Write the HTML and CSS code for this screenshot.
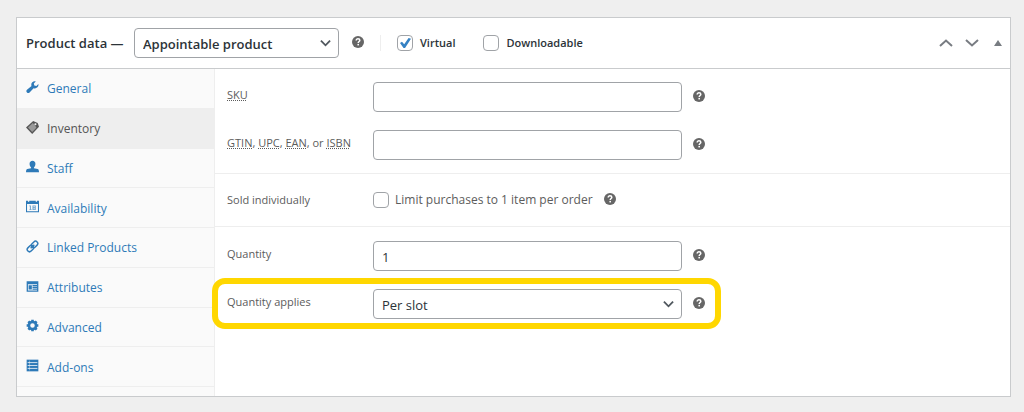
FILE: index.html
```html
<!DOCTYPE html>
<html lang="en">
<head>
    <meta charset="UTF-8">
    <meta name="viewport" content="width=device-width, initial-scale=1.0">
    <title>Product data</title>
    <link rel="stylesheet" href="styles.css">
</head>
<body>
    <!-- Shared icon -->
    <svg class="sprite" aria-hidden="true">
        <symbol id="help" viewBox="0 0 12 12">
            <circle cx="6" cy="6" r="6" fill="#666"/>
            <path d="M4.2 4.6C4.2 3.3 5 2.8 6 2.8s1.800.6 1.800 1.500C7.800 5.500 6.200 5.500 6.200 7" fill="none" stroke="#fff" stroke-width="1.500"/>
            <rect x="5.400" y="7.900" width="1.600" height="1.500" fill="#fff"/>
        </symbol>
    </svg>

    <div class="panel">
        <div class="panel-header">
            <label class="title" for="product-type">Product data —</label>
            <div class="select-wrap type-select">
                <select id="product-type">
                    <option>Appointable product</option>
                </select>
                <svg class="chevron" viewBox="0 0 12 8"><path d="M1 1.500l5 5 5-5"/></svg>
            </div>
            <svg class="help"><use href="#help"/></svg>
            <div class="type-options">
                <label class="check"><input type="checkbox" checked>Virtual</label>
                <label class="check"><input type="checkbox">Downloadable</label>
            </div>
            <div class="panel-actions">
                <button type="button" aria-label="Move up"><svg width="14" height="8" viewBox="0 0 14 8"><path class="arrow" d="M1 7l6-5.500L13 7"/></svg></button>
                <button type="button" aria-label="Move down"><svg width="14" height="8" viewBox="0 0 14 8"><path class="arrow" d="M1 1l6 5.500L13 1"/></svg></button>
                <button type="button" aria-label="Toggle panel"><svg width="8" height="6" viewBox="0 0 8 6"><path fill="#787c82" d="M4 0l4 6H0z"/></svg></button>
            </div>
        </div>

        <div class="panel-body">
            <nav class="tabs">
                <a href="#general">
                    <svg viewBox="0 0 20 20"><path d="M17.500 9.800c-1.600 1.600-3.900 1.900-5.800 1.200L5.500 17.500a2.600 2.600 0 0 1-4-4L8.500 7.800c-.8-2-.4-4.200 1.200-5.700C11.200.6 13.200.2 15 .8l-3 3 .8 3.200 3.200.8 3-3c.5 1.700-.1 3.600-1.500 5z"/></svg>
                    General
                </a>
                <a href="#inventory" class="active">
                    <svg viewBox="0 0 20 20"><path d="M11 0l7 3 2 6L9.500 20 0 10z"/><path d="M10.500 3l4 4.500 1.500 3-6.500 6.500L3 10z" fill="#999"/><circle cx="14.500" cy="5" r="1.600" fill="#eee"/></svg>
                    Inventory
                </a>
                <a href="#staff">
                    <svg viewBox="0 0 20 20"><path d="M10 1c2.800 0 4.500 2 4.500 4.800 0 2.500-1 4.700-2.300 5.700v1.300L18 14c1.300.5 2 2 2 5H0c0-3 .7-4.500 2-5l5.800-1.200v-1.300C6.500 10.500 5.500 8.300 5.500 5.800 5.500 3 7.200 1 10 1z"/></svg>
                    Staff
                </a>
                <a href="#availability">
                    <svg viewBox="0 0 20 20"><path fill-rule="evenodd" d="M0 1h3v1.500h2V1h10v1.500h2V1h3v18H0zM1.600 6v11.400h16.800V6z"/><path d="M5 8.500h2.500v6H9v1H5v-1h1v-5H5zM10 8.500h5v7h-5zm1.500 1.200v1.400h2V9.700zm0 3v1.500h2v-1.500z" fill-rule="evenodd" opacity=".7"/></svg>
                    Availability
                </a>
                <a href="#linked">
                    <svg viewBox="0 0 20 20"><g transform="rotate(-45 10 10)" fill="none" stroke="currentColor" stroke-width="2.200"><rect x="0" y="6.500" width="11" height="7" rx="3.500"/><rect x="9" y="6.500" width="11" height="7" rx="3.500"/><path d="M6 10h8"/></g></svg>
                    Linked Products
                </a>
                <a href="#attributes">
                    <svg viewBox="0 0 20 20"><path fill-rule="evenodd" d="M1 2h18v16H1zM3 6.500v9.500h14V6.500z"/><path d="M4 8h5v6.500H4zM10 7.500h7v2h-7zM10 10.500h7v2h-7zM10 13.500h7V15h-7z"/></svg>
                    Attributes
                </a>
                <a href="#advanced">
                    <svg viewBox="0 0 20 20"><circle cx="10" cy="10" r="5.500" fill="none" stroke="currentColor" stroke-width="4"/><path fill="none" stroke="currentColor" stroke-width="4" d="M10 1v3M10 16v3M1 10h3M16 10h3M3.600 3.600l2.200 2.200M14.200 14.200l2.200 2.200M3.600 16.400l2.200-2.200M14.200 5.800l2.200-2.200"/></svg>
                    Advanced
                </a>
                <a href="#addons">
                    <svg viewBox="0 0 20 20"><path d="M1 1h18v18H1z"/><path stroke="#fafafa" stroke-width="1.200" d="M2.500 5.500h15M2.500 10h15M2.500 14.500h15"/><path stroke="#fafafa" stroke-width=".6" d="M5.500 2.500v15"/></svg>
                    Add-ons
                </a>
            </nav>

            <div class="options">
                <div class="group">
                    <div class="field">
                        <label for="sku"><abbr>SKU</abbr></label>
                        <input type="text" id="sku">
                        <svg class="help"><use href="#help"/></svg>
                    </div>
                    <div class="field">
                        <label for="gtin"><abbr>GTIN</abbr>, <abbr>UPC</abbr>, <abbr>EAN</abbr>, or <abbr>ISBN</abbr></label>
                        <input type="text" id="gtin">
                        <svg class="help"><use href="#help"/></svg>
                    </div>
                </div>
                <div class="group">
                    <div class="field check-field">
                        <label for="sold">Sold individually</label>
                        <input type="checkbox" id="sold">
                        <label class="description" for="sold">Limit purchases to 1 item per order</label>
                        <svg class="help"><use href="#help"/></svg>
                    </div>
                </div>
                <div class="group">
                    <div class="field">
                        <label for="qty">Quantity</label>
                        <input type="text" id="qty" value="1">
                        <svg class="help"><use href="#help"/></svg>
                    </div>
                    <div class="field highlight">
                        <label for="qty-applies">Quantity applies</label>
                        <div class="select-wrap">
                            <select id="qty-applies">
                                <option>Per slot</option>
                            </select>
                            <svg class="chevron" viewBox="0 0 12 8"><path d="M1 1.500l5 5 5-5"/></svg>
                        </div>
                        <svg class="help"><use href="#help"/></svg>
                    </div>
                </div>
            </div>
        </div>
    </div>
</body>
</html>
```
FILE: styles.css
```css
* {
    box-sizing: border-box;
}
body {
    margin: 0;
    padding: 17px 13px 15px 16px;
    background: #efefef;
    color: #2c3338;
    font-family: "Open Sans", "Noto Sans", sans-serif;
    font-size: 12px;
    line-height: 16px;
}
.sprite {
    display: none;
}
.panel {
    background: #fff;
    border: 1px solid #c9cbcd;
}
.panel-header {
    display: flex;
    align-items: center;
    height: 51px;
    padding: 0 8px 0 9px;
    border-bottom: 1px solid #c9cbcd;
    font-weight: 600;
}
.title {
    width: 108px;
    font-size: 13px;
    white-space: nowrap;
}
.select-wrap {
    display: grid;
    align-items: center;
    width: 309px;
}
.select-wrap select,
.select-wrap .chevron {
    grid-area: 1 / 1;
}
.type-select {
    width: 205px;
}
.type-select select {
    font-weight: 600;
}
select,
input[type="text"] {
    width: 100%;
    height: 30px;
    margin: 0;
    padding: 2px 8px 0;
    border: 1px solid #a0a3a7;
    border-radius: 4px;
    background: #fff;
    color: #2c3338;
    font-family: inherit;
    font-size: 13px;
    appearance: none;
}
.chevron {
    justify-self: end;
    width: 11px;
    height: 8px;
    margin-right: 8px;
    fill: none;
    stroke: #50575e;
    stroke-width: 2;
    pointer-events: none;
}
.help {
    flex: none;
    width: 12px;
    height: 12px;
    margin-bottom: 2px;
}
.type-select + .help {
    margin: 0 16px 2px 13px;
}
.type-options {
    display: flex;
    gap: 28px;
    padding-left: 16px;
    border-left: 1px solid #eee;
    font-size: 11px;
}
.check {
    display: flex;
    align-items: center;
    gap: 7px;
}
input[type="checkbox"] {
    flex: none;
    width: 16px;
    height: 16px;
    margin: 0;
    border: 1px solid #a0a3a7;
    border-radius: 4px;
    background: #fff;
    appearance: none;
}
input[type="checkbox"]:checked::before {
    content: "";
    display: block;
    width: 11px;
    height: 10px;
    margin: 2px 0 0 2px;
    background: #3582c4;
    clip-path: polygon(0 50%, 18% 38%, 38% 62%, 78% 0, 100% 8%, 46% 100%, 32% 100%);
}
.panel-actions {
    display: flex;
    gap: 12px;
    margin-left: auto;
}
.panel-actions button {
    display: flex;
    align-items: center;
    padding: 0;
    border: 0;
    background: none;
}
.panel-actions button:last-child {
    margin-left: 3px;
}
.arrow {
    fill: none;
    stroke: #787c82;
    stroke-width: 2;
}
.panel-body {
    display: flex;
    min-height: 327px;
}
.tabs {
    display: flex;
    flex-direction: column;
    flex: none;
    width: 198px;
    padding-bottom: 9px;
    background: #fafafa;
    border-right: 1px solid #eee;
}
.tabs a {
    display: flex;
    flex: 1;
    align-items: center;
    gap: 8px;
    padding: 2px 0 0 9px;
    border-bottom: 1px solid #eee;
    color: #2e7ab8;
    text-decoration: none;
}
.tabs a.active {
    background: #eee;
    color: #555;
}
.tabs svg {
    width: 13px;
    height: 13px;
    margin-bottom: 4px;
    fill: currentColor;
}
.options {
    flex: 1;
}
.group {
    display: flex;
    flex-direction: column;
    gap: 18px;
    padding: 13px 12px;
    border-bottom: 1px solid #eee;
}
.group:last-child {
    padding-top: 14px;
    border-bottom: 0;
}
.field {
    display: flex;
    align-items: center;
    min-height: 26px;
    color: #5c5c5c;
}
.field > label:first-child {
    flex: none;
    width: 146px;
    padding-bottom: 4px;
    font-size: 11px;
}
.check-field > label:first-child {
    padding-bottom: 0;
}
.field input[type="text"] {
    width: 309px;
}
.field .help {
    margin-left: 11px;
}
.description {
    margin-left: 6px;
}
abbr {
    text-decoration: underline dotted;
}
.highlight {
    position: relative;
    align-self: flex-start;
}
/* yellow frame drawn around the row */
.highlight::before {
    content: "";
    position: absolute;
    inset: -11px -16px -10px -15px;
    border: 6px solid #ffd700;
    border-radius: 13px;
    pointer-events: none;
}
```
